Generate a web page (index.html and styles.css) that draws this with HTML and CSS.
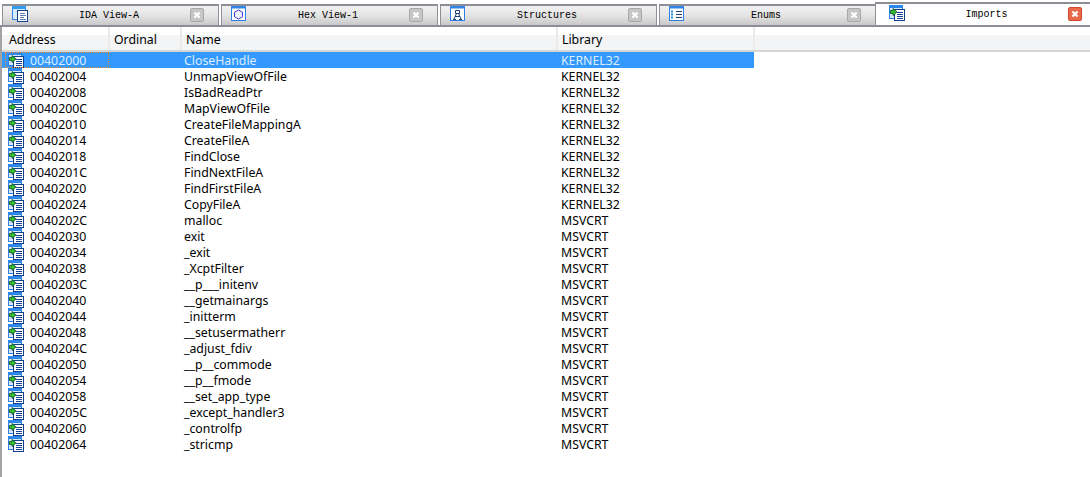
FILE: index.html
```html
<!DOCTYPE html>
<html lang="en">
<head>
<meta charset="utf-8">
<title>Imports</title>
<link rel="stylesheet" href="styles.css">
</head>
<body>
<svg class="defs" width="0" height="0" aria-hidden="true">
  <defs>
    <symbol id="imp" viewBox="0 0 16 16">
      <rect x="0.5" y="0.5" width="13" height="13" fill="#d4e7fb" stroke="#2f7fe0"/>
      <rect x="0" y="0" width="14" height="3" fill="#2f86ea"/>
      <rect x="5.5" y="4.5" width="10" height="11" fill="#fff" stroke="#12418c"/>
      <path d="M8 7.500h6M8 9.500h6M8 11.500h6M8 13.500h6" stroke="#1d3f9c"/>
      <path d="M1.500 5.500h2.500V3.500L8 7 4 10.500V8.500H1.500z" fill="#35c03a" stroke="#0c4a14" stroke-width=".8"/>
    </symbol>
    <symbol id="ida" viewBox="0 0 16 16">
      <rect x="0.5" y="0.5" width="13" height="13" fill="#d8ecfd" stroke="#2f86ea"/>
      <rect x="0" y="0" width="14" height="3" fill="#2f9cf0"/>
      <rect x="5.500" y="4.500" width="10" height="11" fill="#fff" stroke="#12418c"/>
      <path d="M8 7.500h5M8 9.500h6M8 11.500h4M8 13.500h6" stroke="#5a7ab0"/>
    </symbol>
    <symbol id="hex" viewBox="0 0 16 16">
      <rect x="0.5" y="0.5" width="14" height="14" fill="#fff" stroke="#2f7fe8"/>
      <rect x="0" y="0" width="15" height="2.500" fill="#2f86ea"/>
      <path d="M7.500 4l4 2.200v4.600l-4 2.200-4-2.200V6.200z" fill="#eef0ff" stroke="#3a3ad8"/>
    </symbol>
    <symbol id="str" viewBox="0 0 16 16">
      <rect x="0.5" y="0.5" width="14" height="14" fill="#fff" stroke="#2f7fe8"/>
      <rect x="0" y="0" width="15" height="2.500" fill="#2f86ea"/>
      <path d="M5.500 4.500h4v3h-4zM6.500 7.500L4 13M8.500 7.500l2.500 5.500M3 13.500h3M9 13.500h3M5 10.500h5" fill="none" stroke="#1f3f70"/>
    </symbol>
    <symbol id="enu" viewBox="0 0 16 16">
      <rect x="0.5" y="0.5" width="14" height="14" fill="#fff" stroke="#2f7fe8"/>
      <rect x="0" y="0" width="15" height="2.500" fill="#2f86ea"/>
      <path d="M3 4.500v2M3 7.500v2M3 10.500v2" stroke="#2090e0" stroke-width="2"/>
      <path d="M7 5.500h6M7 8.500h6M7 11.500h6" stroke="#1f3f70"/>
    </symbol>
    <symbol id="x" viewBox="0 0 14 14">
      <path d="M4 4l6 6M10 4l-6 6" stroke="#fff" stroke-width="2.600"/>
    </symbol>
  </defs>
</svg>

<nav class="tabs">
  <div class="tab"><svg class="tab-icon"><use href="#ida"/></svg><span class="tab-label">IDA View-A</span><span class="close"><svg class="close-x"><use href="#x"/></svg></span></div>
  <div class="tab"><svg class="tab-icon"><use href="#hex"/></svg><span class="tab-label">Hex View-1</span><span class="close"><svg class="close-x"><use href="#x"/></svg></span></div>
  <div class="tab"><svg class="tab-icon"><use href="#str"/></svg><span class="tab-label">Structures</span><span class="close"><svg class="close-x"><use href="#x"/></svg></span></div>
  <div class="tab"><svg class="tab-icon"><use href="#enu"/></svg><span class="tab-label">Enums</span><span class="close"><svg class="close-x"><use href="#x"/></svg></span></div>
  <div class="tab active"><svg class="tab-icon"><use href="#imp"/></svg><span class="tab-label">Imports</span><span class="close"><svg class="close-x"><use href="#x"/></svg></span></div>
</nav>

<main class="panel">
  <div class="row head">
    <div class="c addr">Address</div><div class="c ord">Ordinal</div><div class="c name">Name</div><div class="c lib">Library</div><div class="c rest"></div>
  </div>
  <div class="row selected"><div class="c addr"><svg class="ri"><use href="#imp"/></svg>00402000</div><div class="c ord"></div><div class="c name">CloseHandle</div><div class="c lib">KERNEL32</div></div>
  <div class="row"><div class="c addr"><svg class="ri"><use href="#imp"/></svg>00402004</div><div class="c ord"></div><div class="c name">UnmapViewOfFile</div><div class="c lib">KERNEL32</div></div>
  <div class="row"><div class="c addr"><svg class="ri"><use href="#imp"/></svg>00402008</div><div class="c ord"></div><div class="c name">IsBadReadPtr</div><div class="c lib">KERNEL32</div></div>
  <div class="row"><div class="c addr"><svg class="ri"><use href="#imp"/></svg>0040200C</div><div class="c ord"></div><div class="c name">MapViewOfFile</div><div class="c lib">KERNEL32</div></div>
  <div class="row"><div class="c addr"><svg class="ri"><use href="#imp"/></svg>00402010</div><div class="c ord"></div><div class="c name">CreateFileMappingA</div><div class="c lib">KERNEL32</div></div>
  <div class="row"><div class="c addr"><svg class="ri"><use href="#imp"/></svg>00402014</div><div class="c ord"></div><div class="c name">CreateFileA</div><div class="c lib">KERNEL32</div></div>
  <div class="row"><div class="c addr"><svg class="ri"><use href="#imp"/></svg>00402018</div><div class="c ord"></div><div class="c name">FindClose</div><div class="c lib">KERNEL32</div></div>
  <div class="row"><div class="c addr"><svg class="ri"><use href="#imp"/></svg>0040201C</div><div class="c ord"></div><div class="c name">FindNextFileA</div><div class="c lib">KERNEL32</div></div>
  <div class="row"><div class="c addr"><svg class="ri"><use href="#imp"/></svg>00402020</div><div class="c ord"></div><div class="c name">FindFirstFileA</div><div class="c lib">KERNEL32</div></div>
  <div class="row"><div class="c addr"><svg class="ri"><use href="#imp"/></svg>00402024</div><div class="c ord"></div><div class="c name">CopyFileA</div><div class="c lib">KERNEL32</div></div>
  <div class="row"><div class="c addr"><svg class="ri"><use href="#imp"/></svg>0040202C</div><div class="c ord"></div><div class="c name">malloc</div><div class="c lib">MSVCRT</div></div>
  <div class="row"><div class="c addr"><svg class="ri"><use href="#imp"/></svg>00402030</div><div class="c ord"></div><div class="c name">exit</div><div class="c lib">MSVCRT</div></div>
  <div class="row"><div class="c addr"><svg class="ri"><use href="#imp"/></svg>00402034</div><div class="c ord"></div><div class="c name">_exit</div><div class="c lib">MSVCRT</div></div>
  <div class="row"><div class="c addr"><svg class="ri"><use href="#imp"/></svg>00402038</div><div class="c ord"></div><div class="c name">_XcptFilter</div><div class="c lib">MSVCRT</div></div>
  <div class="row"><div class="c addr"><svg class="ri"><use href="#imp"/></svg>0040203C</div><div class="c ord"></div><div class="c name">__p___initenv</div><div class="c lib">MSVCRT</div></div>
  <div class="row"><div class="c addr"><svg class="ri"><use href="#imp"/></svg>00402040</div><div class="c ord"></div><div class="c name">__getmainargs</div><div class="c lib">MSVCRT</div></div>
  <div class="row"><div class="c addr"><svg class="ri"><use href="#imp"/></svg>00402044</div><div class="c ord"></div><div class="c name">_initterm</div><div class="c lib">MSVCRT</div></div>
  <div class="row"><div class="c addr"><svg class="ri"><use href="#imp"/></svg>00402048</div><div class="c ord"></div><div class="c name">__setusermatherr</div><div class="c lib">MSVCRT</div></div>
  <div class="row"><div class="c addr"><svg class="ri"><use href="#imp"/></svg>0040204C</div><div class="c ord"></div><div class="c name">_adjust_fdiv</div><div class="c lib">MSVCRT</div></div>
  <div class="row"><div class="c addr"><svg class="ri"><use href="#imp"/></svg>00402050</div><div class="c ord"></div><div class="c name">__p__commode</div><div class="c lib">MSVCRT</div></div>
  <div class="row"><div class="c addr"><svg class="ri"><use href="#imp"/></svg>00402054</div><div class="c ord"></div><div class="c name">__p__fmode</div><div class="c lib">MSVCRT</div></div>
  <div class="row"><div class="c addr"><svg class="ri"><use href="#imp"/></svg>00402058</div><div class="c ord"></div><div class="c name">__set_app_type</div><div class="c lib">MSVCRT</div></div>
  <div class="row"><div class="c addr"><svg class="ri"><use href="#imp"/></svg>0040205C</div><div class="c ord"></div><div class="c name">_except_handler3</div><div class="c lib">MSVCRT</div></div>
  <div class="row"><div class="c addr"><svg class="ri"><use href="#imp"/></svg>00402060</div><div class="c ord"></div><div class="c name">_controlfp</div><div class="c lib">MSVCRT</div></div>
  <div class="row"><div class="c addr"><svg class="ri"><use href="#imp"/></svg>00402064</div><div class="c ord"></div><div class="c name">_stricmp</div><div class="c lib">MSVCRT</div></div>
</main>
</body>
</html>
```

FILE: styles.css
```css
* {
  box-sizing: border-box;
}

html,
body {
  margin: 0;
  height: 100%;
  overflow: hidden;
  background: #fff;
}

body {
  display: flex;
  flex-direction: column;
  font-family: "Noto Sans", "Liberation Sans", sans-serif;
  font-size: 12.3px;
  color: #000;
}

.defs {
  display: block;
  flex: none;
}

.tabs {
  flex: none;
  display: flex;
  align-items: flex-end;
  gap: 2px;
  height: 27px;
  padding-left: 2px;
  border-bottom: 2px solid #8e8e96;
}

.tab {
  flex: none;
  display: flex;
  align-items: center;
  width: 217px;
  height: 21px;
  padding: 0 14px 0 9px;
  border-top: 2px solid #8e8e96;
  border-left: 1px solid #8e8e96;
  border-right: 1px solid #8e8e96;
  background: linear-gradient(#f1f1f1, #e6e6e6 45%, #c9c9c9);
}

.tab.active {
  width: 215px;
  height: 23px;
  margin-left: -3px;
  padding: 0 8px 0 13px;
  border-right: 0;
  background: #fff;
}

.tab-icon {
  flex: none;
  width: 16px;
  height: 16px;
  margin-top: -3px;
}

.tab-label {
  flex: 1;
  text-align: center;
  font-family: "Liberation Mono", "DejaVu Sans Mono", monospace;
  font-size: 10px;
  color: #000;
}

.close {
  flex: none;
  display: flex;
  width: 14px;
  height: 14px;
  margin-top: -1px;
  border-radius: 2px;
  background: #c6c6c6;
  border: 1px solid #a8a8a8;
  align-items: center;
  justify-content: center;
}

.active .close {
  background: #e86a4a;
  border-color: #d2492a;
}

.close-x {
  width: 12px;
  height: 12px;
}

.panel {
  flex: 1;
  min-height: 0;
  border-left: 2px solid #a3a3a3;
}

.row {
  display: flex;
  width: 752px;
  height: 16px;
  line-height: 16px;
}

.c {
  flex: none;
  white-space: nowrap;
  padding-top: 1px;
  padding-left: 3px;
}

.addr {
  display: flex;
  align-items: flex-start;
  width: 107px;
  padding-left: 6px;
}

.ord {
  width: 72px;
}

.name {
  width: 376px;
}

.lib {
  width: 197px;
  padding-left: 4px;
}

.ri {
  flex: none;
  width: 16px;
  height: 16px;
  margin-top: -1px;
  margin-right: 6px;
}

.head {
  width: 100%;
  height: 25px;
  line-height: 24px;
  background: linear-gradient(#fff 0, #fff 36%, #f3f4f6 37%, #f3f4f6 100%);
  border-bottom: 2px solid #d6d6d6;
}

.head .c {
  padding-left: 4px;
  border-right: 2px solid #eaeaea;
}

.head .addr {
  width: 108px;
  padding-left: 7px;
}

.head .rest {
  flex: 1;
  border-right: 0;
}

.selected {
  background: #3399ff;
  color: #dcedff;
}

.selected .addr {
  outline: 1px dotted #e8873a;
  outline-offset: -1px;
  margin-left: 3px;
  width: 104px;
  padding-left: 3px;
}
```
